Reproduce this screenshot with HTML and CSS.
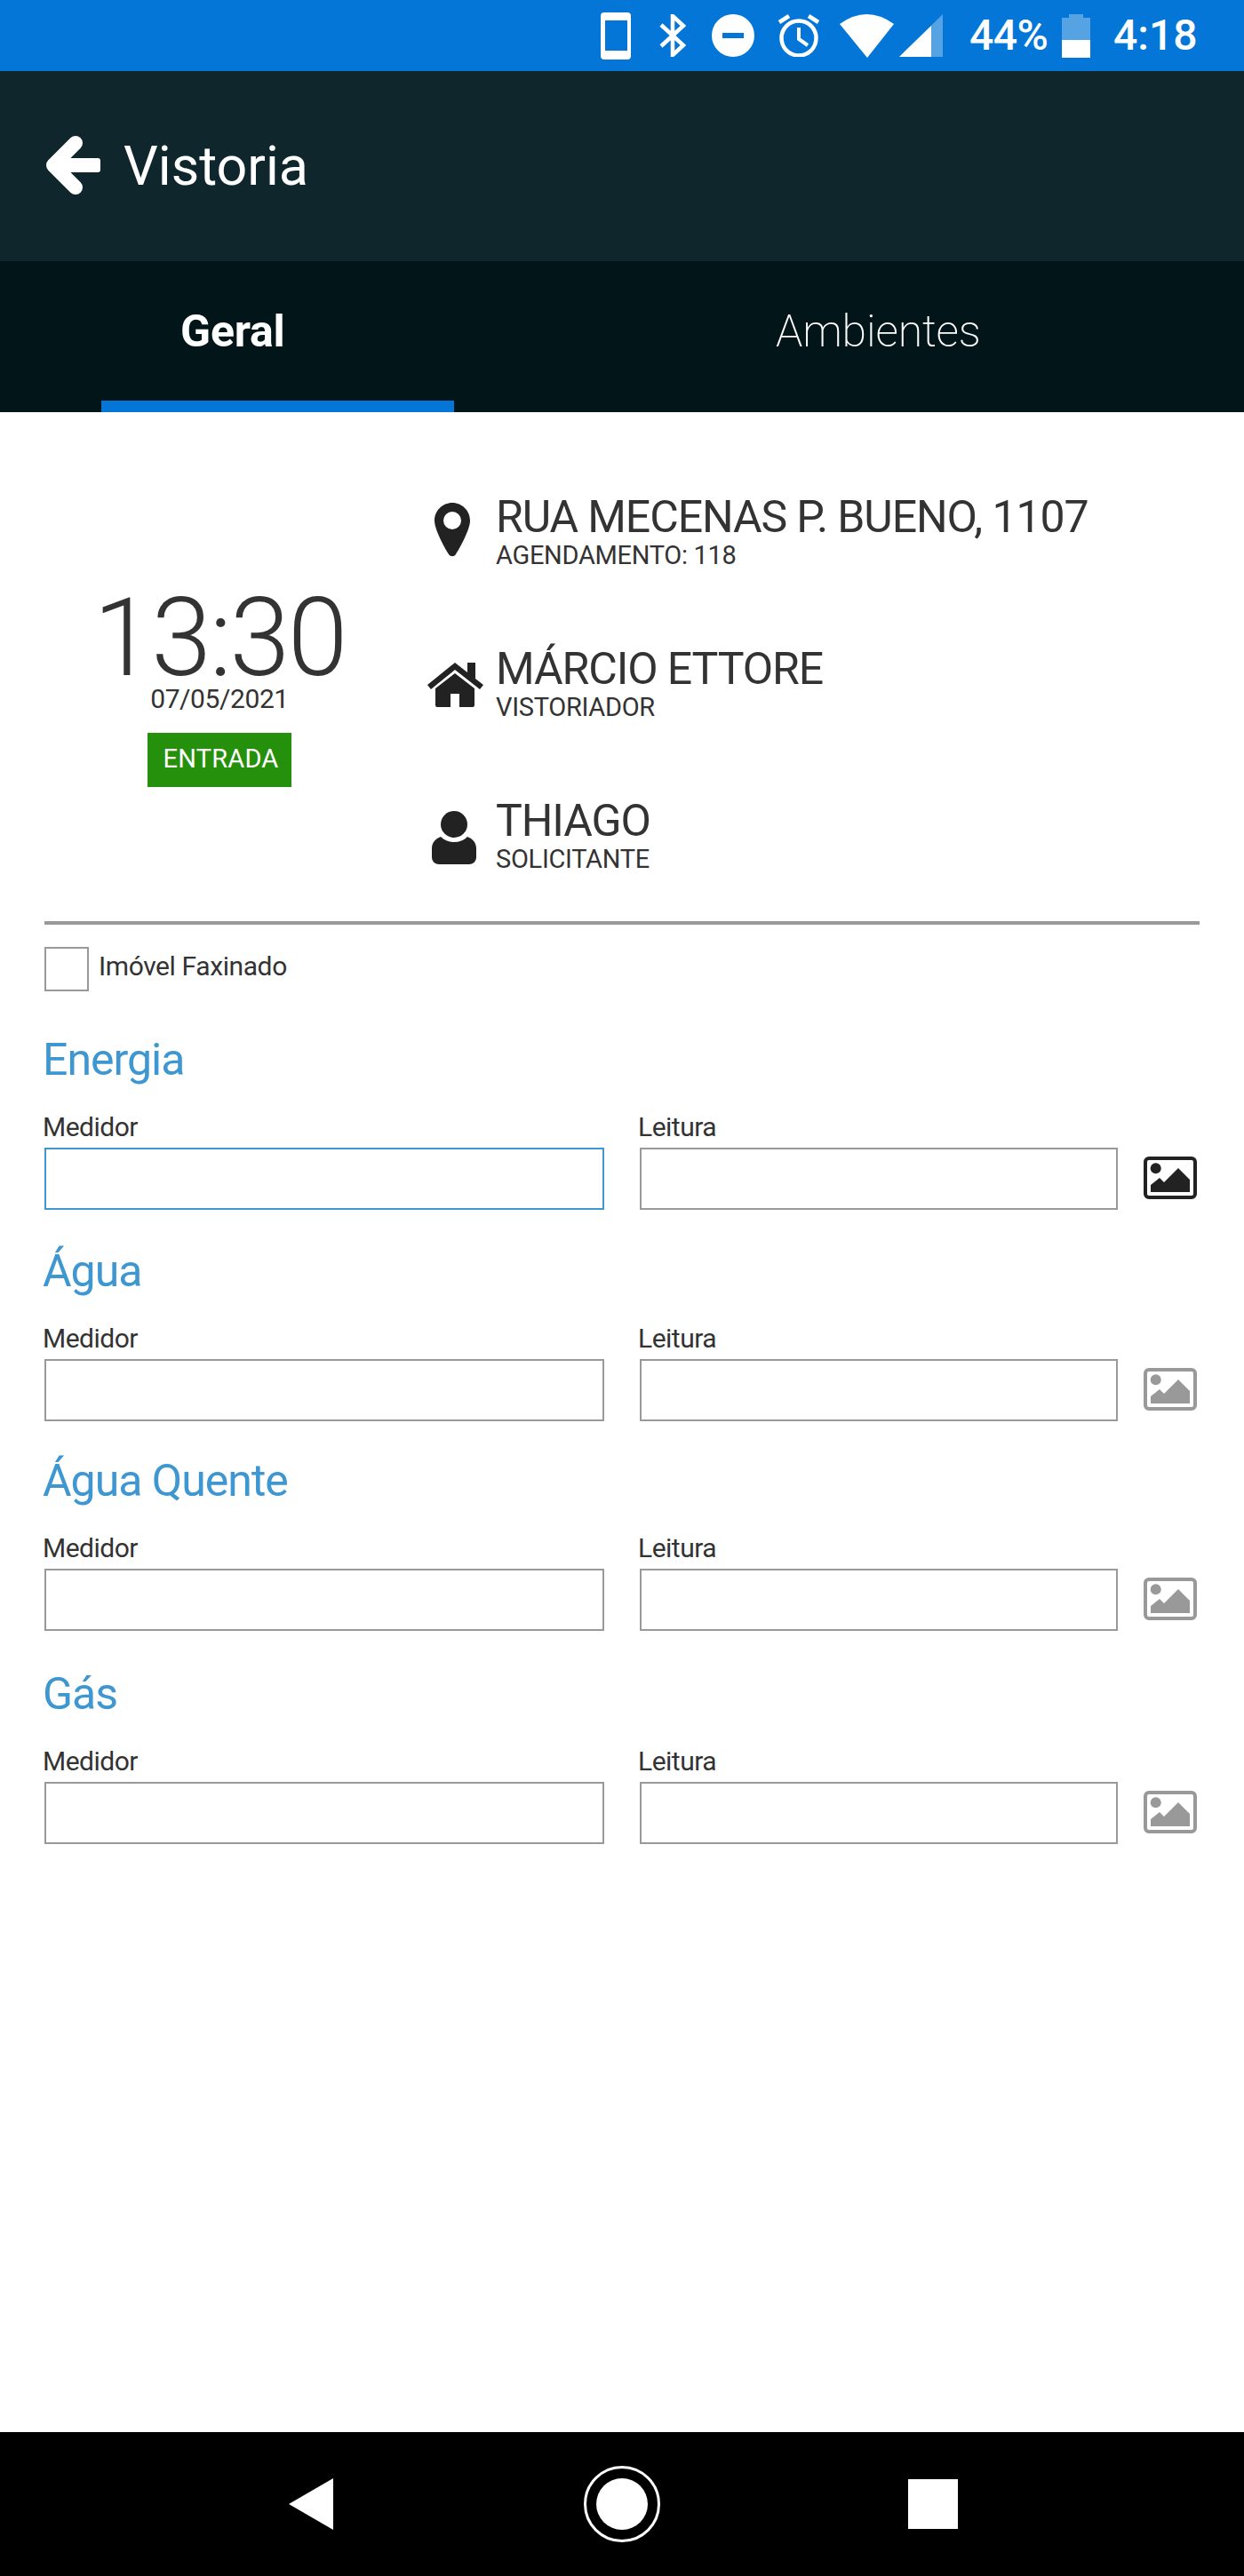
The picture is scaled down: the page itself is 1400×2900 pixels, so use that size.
FILE: index.html
```html
<!DOCTYPE html>
<html lang="pt">
<head>
<meta charset="utf-8">
<title>Vistoria</title>
<link rel="stylesheet" href="styles.css">
</head>
<body>
<div class="screen">
  <div class="status">
    <svg class="st st-phone" viewBox="0 0 34 53"><path fill-rule="evenodd" d="M4 0H30Q34 0 34 4V49Q34 53 30 53H4Q0 53 0 49V4Q0 0 4 0ZM5 9V43H30V9Z"/></svg>
    <svg class="st st-bt" viewBox="0 0 30 48"><polyline class="line" points="2,12 27,35 15,46 15,2 27,13 2,36"/></svg>
    <svg class="st st-dnd" viewBox="0 0 48 48"><path fill-rule="evenodd" d="M24 0A24 24 0 1 1 24 48A24 24 0 1 1 24 0ZM12 21V27H36V21Z"/></svg>
    <svg class="st st-alarm" viewBox="0 0 48 48"><circle class="line" cx="24" cy="27" r="19.5"/><polyline class="line thin" points="24,15 24,28 34,35"/><line class="line" x1="2" y1="9" x2="13" y2="2"/><line class="line" x1="46" y1="9" x2="35" y2="2"/></svg>
    <svg class="st st-wifi" viewBox="0 0 61 49"><path d="M0 11Q30.500 -11 61 11L31 49Z"/></svg>
    <svg class="st st-signal" viewBox="0 0 49 48"><path class="dim" d="M0 48L49 0V48Z"/><path d="M0 48L36 13V48Z"/></svg>
    <span class="st-text st-pct">44%</span>
    <svg class="st st-batt" viewBox="0 0 32 49"><path class="dim" d="M8 0H24V4H32V29H0V4H8Z"/><rect y="29" width="32" height="20"/></svg>
    <span class="st-text st-time">4:18</span>
  </div>

  <header class="appbar">
    <svg class="back" viewBox="0 0 61 66"><polyline class="back-head" points="33,8 8,33 33,58"/><rect x="12" y="25" width="49" height="16" rx="3"/></svg>
    <h1 class="apptitle">Vistoria</h1>
  </header>

  <nav class="tabs">
    <div class="tab tab-geral"><span class="tab-active-label">Geral</span></div>
    <div class="tab tab-amb">Ambientes</div>
  </nav>

  <main class="content">
    <section class="hero">
      <div class="when">
        <div class="time">13:30</div>
        <div class="date">07/05/2021</div>
        <div class="badge">ENTRADA</div>
      </div>
      <div class="facts">
        <div class="fact">
          <div class="fact-icon"><svg class="ic-pin" viewBox="0 0 40 61"><path fill-rule="evenodd" d="M20 0C31 0 40 9 40 20C40 30 29 50 24 58C22 61 18 61 16 58C11 50 0 30 0 20C0 9 9 0 20 0ZM20 10A10 10 0 1 0 20 30A10 10 0 1 0 20 10Z"/></svg></div>
          <div><div class="fact-title">RUA MECENAS P. BUENO, 1107</div><div class="fact-sub">AGENDAMENTO: 118</div></div>
        </div>
        <div class="fact">
          <div class="fact-icon"><svg class="ic-house" viewBox="0 0 63 50"><path d="M31 0L45 11V0H54V18L63 25L59 30L31 8L4 30L0 25Z"/><path d="M31 12L53 29V48Q53 50 51 50H36V35H26V50H11Q9 50 9 48V29Z"/></svg></div>
          <div><div class="fact-title">MÁRCIO ETTORE</div><div class="fact-sub">VISTORIADOR</div></div>
        </div>
        <div class="fact">
          <div class="fact-icon"><svg class="ic-person" viewBox="0 0 50 60"><circle cx="25" cy="15" r="15"/><path d="M10 29C14 33 19 35 25 35C31 35 36 33 40 29C46 31 50 36 50 42V52C50 57 46 60 42 60H8C4 60 0 57 0 52V42C0 36 4 31 10 29Z"/></svg></div>
          <div><div class="fact-title">THIAGO</div><div class="fact-sub">SOLICITANTE</div></div>
        </div>
      </div>
    </section>

    <hr class="divider">

    <label class="check">
      <span class="check-box"></span>
      <span class="check-label">Imóvel Faxinado</span>
    </label>

    <section class="meter">
      <h2 class="meter-title">Energia</h2>
      <div class="meter-row">
        <div class="field field-a"><div class="field-label">Medidor</div><input class="input input-focus" type="text"></div>
        <div class="field field-b"><div class="field-label">Leitura</div><input class="input" type="text"></div>
        <svg class="photo photo-on" viewBox="0 0 60 48"><rect class="photo-frame" x="2" y="2" width="56" height="44" rx="4"/><circle cx="13.700" cy="13.300" r="6"/><path d="M8 40V32L18 24L23 29L39 13L52 26V40Z"/></svg>
      </div>
    </section>

    <section class="meter">
      <h2 class="meter-title">Água</h2>
      <div class="meter-row">
        <div class="field field-a"><div class="field-label">Medidor</div><input class="input" type="text"></div>
        <div class="field field-b"><div class="field-label">Leitura</div><input class="input" type="text"></div>
        <svg class="photo" viewBox="0 0 60 48"><rect class="photo-frame" x="2" y="2" width="56" height="44" rx="4"/><circle cx="13.700" cy="13.300" r="6"/><path d="M8 40V32L18 24L23 29L39 13L52 26V40Z"/></svg>
      </div>
    </section>

    <section class="meter meter-hot">
      <h2 class="meter-title">Água Quente</h2>
      <div class="meter-row">
        <div class="field field-a"><div class="field-label">Medidor</div><input class="input" type="text"></div>
        <div class="field field-b"><div class="field-label">Leitura</div><input class="input" type="text"></div>
        <svg class="photo" viewBox="0 0 60 48"><rect class="photo-frame" x="2" y="2" width="56" height="44" rx="4"/><circle cx="13.700" cy="13.300" r="6"/><path d="M8 40V32L18 24L23 29L39 13L52 26V40Z"/></svg>
      </div>
    </section>

    <section class="meter meter-gas">
      <h2 class="meter-title">Gás</h2>
      <div class="meter-row">
        <div class="field field-a"><div class="field-label">Medidor</div><input class="input" type="text"></div>
        <div class="field field-b"><div class="field-label">Leitura</div><input class="input" type="text"></div>
        <svg class="photo" viewBox="0 0 60 48"><rect class="photo-frame" x="2" y="2" width="56" height="44" rx="4"/><circle cx="13.700" cy="13.300" r="6"/><path d="M8 40V32L18 24L23 29L39 13L52 26V40Z"/></svg>
      </div>
    </section>
  </main>

  <footer class="navbar">
    <svg class="nav-back" viewBox="0 0 50 58"><path d="M0 29L50 0V58Z"/></svg>
    <svg class="nav-home" viewBox="0 0 86 86"><circle class="nav-ring" cx="43" cy="43" r="41.500"/><circle cx="43" cy="43" r="29"/></svg>
    <div class="nav-recent"></div>
  </footer>
</div>
</body>
</html>
```

FILE: styles.css
```css
* { box-sizing: border-box; }
html, body { margin: 0; padding: 0; background: #fff; }
body { font-family: Roboto, "Noto Sans", sans-serif; color: #333; }
.screen { width: 1400px; height: 2900px; display: flex; flex-direction: column; overflow: hidden; }

/* status bar */
.status { height: 80px; flex: none; background: #0476d7; display: flex; align-items: center; padding-left: 676px; }
.st { display: block; fill: #fff; flex: none; }
.line { fill: none; stroke: #fff; stroke-width: 4.500; }
.line.thin { stroke-width: 4; }
.dim { fill: rgba(255, 255, 255, 0.33); }
.st-phone { width: 34px; height: 53px; }
.st-bt { width: 30px; height: 48px; margin-left: 32px; }
.st-dnd { width: 48px; height: 48px; margin-left: 29px; }
.st-alarm { width: 48px; height: 48px; margin-left: 26px; }
.st-wifi { width: 61px; height: 49px; margin-left: 22px; }
.st-signal { width: 49px; height: 48px; margin-left: 6px; }
.st-batt { width: 32px; height: 49px; margin-left: 16px; }
.st-text { color: #fff; font-size: 48px; font-weight: 500; line-height: 80px; white-space: nowrap; }
.st-pct { margin-left: 30px; width: 88px; letter-spacing: -0.5px; }
.st-time { margin-left: 26px; }

/* app bar */
.appbar { height: 214px; flex: none; background: #0f262c; display: flex; align-items: center; padding-left: 52px; }
.back { width: 61px; height: 66px; fill: #fff; flex: none; margin-top: -2px; }
.back-head { fill: none; stroke: #fff; stroke-width: 16; stroke-linecap: round; stroke-linejoin: round; }
.apptitle { margin: 0 0 0 26px; font-size: 61px; font-weight: 400; color: #fff; line-height: 70px; }

/* tabs */
.tabs { height: 170px; flex: none; background: #021518; display: flex; color: #fff; }
.tab { font-size: 50px; line-height: 158px; white-space: nowrap; }
.tab-geral { width: 397px; margin-left: 114px; border-bottom: 13px solid #0476d7; height: 170px; }
.tab-active-label { display: block; margin-left: 89px; font-weight: 700; letter-spacing: -0.2px; }
.tab-amb { margin-left: 362px; font-weight: 200; color: #fff; letter-spacing: -0.2px; }

/* content */
.content { flex: 1; padding: 0 50px; min-height: 0; }
.hero { display: flex; padding-top: 94px; }
.when { width: 394px; flex: none; padding-top: 106px; display: flex; flex-direction: column; align-items: center; }
.time { font-size: 122px; font-weight: 350; line-height: 110px; color: #333; letter-spacing: -2.500px; }
.date { font-size: 30px; line-height: 25px; font-weight: 400; color: #333; letter-spacing: -0.4px; }
.badge { margin-top: 26px; width: 162px; height: 61px; background: #25900c; color: #fff; font-size: 29px; line-height: 59px; font-weight: 400; text-align: center; padding-left: 3px; letter-spacing: 0.2px; }
.facts { display: flex; flex-direction: column; gap: 85px; }
.fact { display: flex; align-items: flex-start; }
.fact-icon { width: 88px; margin-left: 26px; height: 86px; flex: none; display: flex; justify-content: flex-start; }
.fact-icon svg { display: block; fill: #222; }
.ic-pin { width: 40px; height: 61px; margin: 8px 0 0 19px; }
.ic-house { width: 63px; height: 50px; margin: 17px 0 0 11px; }
.ic-person { width: 50px; height: 60px; margin: 13px 0 0 16px; }
.fact-title { font-size: 50px; line-height: 48px; font-weight: 400; color: #333; white-space: nowrap; letter-spacing: -1.1px; }
.fact-sub { font-size: 29px; line-height: 38px; font-weight: 400; color: #333; white-space: nowrap; letter-spacing: -0.3px; }

.divider { height: 4px; margin: 51px 0 0; border: 0; background: #999; }
.check { display: flex; align-items: flex-start; margin-top: 25px; }
.check-box { width: 50px; height: 50px; border: 2px solid #999; flex: none; }
.check-label { margin: 7px 0 0 11px; font-size: 30px; line-height: 30px; font-weight: 400; color: #333; letter-spacing: -0.4px; }

.meter { margin-top: 39px; }
.check + .meter { margin-top: 47px; }
.meter-hot { margin-top: 37px; }
.meter-gas { margin-top: 41px; }
.meter-title { margin: 0 0 31px -2px; font-size: 50px; line-height: 60px; font-weight: 400; color: #3e97d0; letter-spacing: -1px; }
.meter-row { display: flex; align-items: flex-end; }
.field { flex: none; }
.field-a { width: 630px; }
.field-b { width: 538px; margin-left: 40px; }
.field-label { margin: 0 0 8px -2px; font-size: 30px; line-height: 30px; color: #333; letter-spacing: -0.5px; }
.input { display: block; width: 100%; height: 70px; border: 2px solid #999; background: #fff; outline: 0; padding: 0 10px; border-radius: 0; }
.input-focus { border-color: #3e97d0; }
.photo { width: 60px; height: 48px; margin: 0 0 12px 29px; flex: none; fill: #999; display: block; }
.photo-frame { fill: none; stroke: #999; stroke-width: 4; }
.photo-on { fill: #222; }
.photo-on .photo-frame { stroke: #222; }

/* nav bar */
.navbar { height: 162px; flex: none; background: #000; display: flex; align-items: center; }
.nav-back { width: 50px; height: 58px; fill: #fff; margin-left: 325px; display: block; }
.nav-home { width: 86px; height: 86px; fill: #fff; margin-left: 282px; display: block; }
.nav-ring { fill: none; stroke: #fff; stroke-width: 3; }
.nav-recent { width: 56px; height: 56px; background: #fff; margin-left: 279px; }
```
